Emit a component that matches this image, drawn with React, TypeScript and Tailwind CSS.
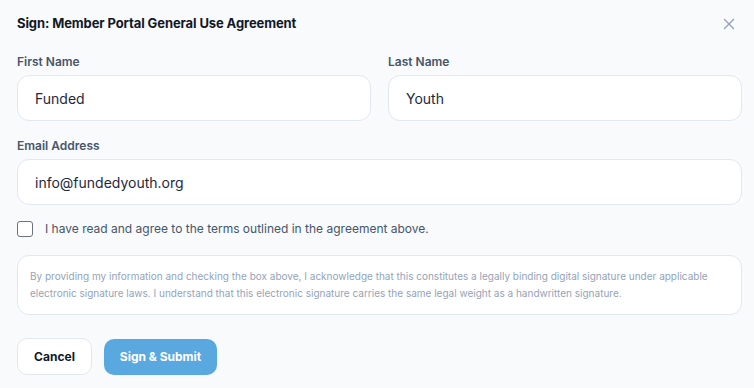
import React from "react";

export default function App() {
  return (
    <div
      className="w-[754px] h-[388px] bg-[#f8fafc] pl-[17px] pr-[12px] pt-[15px] text-[#1e293b]"
      style={{ fontFamily: "Inter, 'Noto Sans', sans-serif" }}
    >
      <div className="flex items-center justify-between h-[18px]">
        <h2 className="text-[13px] font-bold text-[#111827] tracking-[-0.1px]">
          Sign: Member Portal General Use Agreement
        </h2>
        <button className="mr-[7px] text-[#94a3b8]">
          <svg width="12" height="12" viewBox="0 0 12 12" fill="none" stroke="currentColor" strokeWidth="1.4" strokeLinecap="round">
            <path d="M1.5 1.5L10.5 10.5M10.5 1.5L1.5 10.5" />
          </svg>
        </button>
      </div>

      <div className="grid grid-cols-2 gap-[17px] mt-[21px]">
        <div>
          <label className="block text-[12px] font-semibold text-[#475569] leading-[16px]">First Name</label>
          <div className="mt-[5px] h-[46px] rounded-[12px] border border-[#e2e8f0] bg-white flex items-center px-[17px] text-[14px] text-[#1e293b]">
            Funded
          </div>
        </div>
        <div>
          <label className="block text-[12px] font-semibold text-[#475569] leading-[16px]">Last Name</label>
          <div className="mt-[5px] h-[46px] rounded-[12px] border border-[#e2e8f0] bg-white flex items-center px-[17px] text-[14px] text-[#1e293b]">
            Youth
          </div>
        </div>
      </div>

      <div className="mt-[17px]">
        <label className="block text-[12px] font-semibold text-[#475569] leading-[16px]">Email Address</label>
        <div className="mt-[5px] h-[46px] rounded-[12px] border border-[#e2e8f0] bg-white flex items-center px-[17px] text-[14px] text-[#1e293b]">
          info@fundedyouth.org
        </div>
      </div>

      <div className="mt-[15px] flex items-center gap-[12px]">
        <div className="w-[16px] h-[16px] rounded-[3px] border border-[#6b7280] bg-white" />
        <span className="text-[12px] text-[#475569]">
          I have read and agree to the terms outlined in the agreement above.
        </span>
      </div>

      <div className="mt-[17px] rounded-[12px] border border-[#e2e8f0] bg-white px-[12px] py-[12px] text-[10px] leading-[17px] text-[#94a3b8]">
        By providing my information and checking the box above, I acknowledge that this constitutes a legally binding digital signature under applicable electronic signature laws. I understand that this electronic signature carries the same legal weight as a handwritten signature.
      </div>

      <div className="mt-[23px] flex items-center gap-[12px]">
        <button className="h-[37px] w-[75px] rounded-[10px] border border-[#e2e8f0] bg-white text-[12px] font-bold text-[#111827]">
          Cancel
        </button>
        <button className="h-[36px] w-[113px] rounded-[10px] bg-[#5aa8e0] text-[12px] font-bold text-white">
          Sign &amp; Submit
        </button>
      </div>
    </div>
  );
}
